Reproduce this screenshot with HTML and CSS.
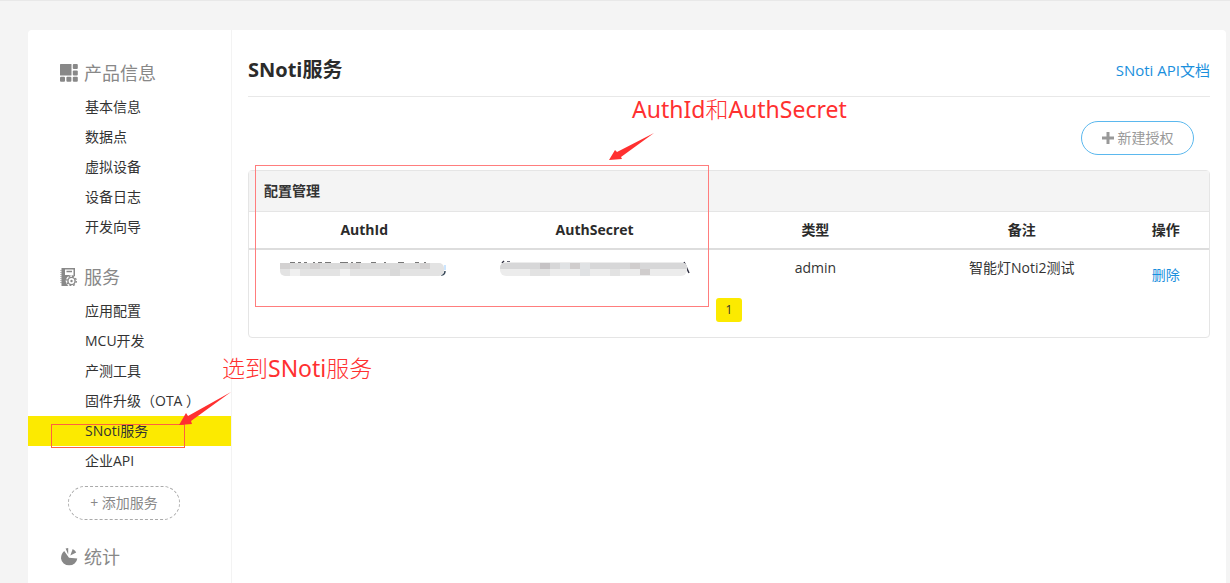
FILE: index.html
```html
<!DOCTYPE html>
<html lang="zh-CN">
<head>
<meta charset="utf-8">
<meta name="viewport" content="width=device-width, initial-scale=1">
<title>SNoti服务</title>
<link rel="stylesheet" href="styles.css">
</head>
<body>
<div class="card">
  <nav class="sidebar">
    <h2 class="group-title">
      <svg class="group-icon" viewBox="0 0 18 18"><rect width="11.500" height="11.500" rx=".5"/><rect x="12.800" width="5" height="5" rx="1"/><rect x="12.800" y="6.500" width="5" height="5" rx="1"/><rect x="12.800" y="12.800" width="5" height="5" rx="1"/><rect x="6.400" y="12.800" width="5" height="5" rx="1"/><rect y="12.800" width="5" height="5" rx="1"/></svg>
      产品信息
    </h2>
    <ul class="menu">
      <li><a class="item" href="#">基本信息</a></li>
      <li><a class="item" href="#">数据点</a></li>
      <li><a class="item" href="#">虚拟设备</a></li>
      <li><a class="item" href="#">设备日志</a></li>
      <li><a class="item" href="#">开发向导</a></li>
    </ul>
    <h2 class="group-title">
      <svg class="group-icon" viewBox="0 0 18 18"><path fill-rule="evenodd" d="M1.500 0H15v9H9v9H1.500zM5 1.500v5.500h8.500V1.500zM6.500 2.800h5.500v1.500H6.500z"/><path d="M1 2v14" stroke="#888" stroke-dasharray="1 1"/><circle cx="11.500" cy="13" r="5.800" fill="#fff"/><circle cx="11.500" cy="13" r="3.600" fill="none" stroke="#888" stroke-width="1.400"/><circle cx="11.500" cy="13" r="4.800" fill="none" stroke="#888" stroke-width="1.300" stroke-dasharray="1.880 1.890"/><circle cx="11.500" cy="13" r="1.200"/></svg>
      服务
    </h2>
    <ul class="menu">
      <li><a class="item" href="#">应用配置</a></li>
      <li><a class="item" href="#">MCU开发</a></li>
      <li><a class="item" href="#">产测工具</a></li>
      <li><a class="item" href="#">固件升级（OTA ）</a></li>
      <li><a class="item active" href="#">SNoti服务</a></li>
      <li><a class="item" href="#">企业API</a></li>
    </ul>
    <button class="add-service" type="button">+ 添加服务</button>
    <h2 class="group-title">
      <svg class="group-icon" viewBox="0 0 18 18"><path d="M4.200 3L9 9.800l8.300.700A8.200 7.700 0 0 1 1 10.500Q1 5.500 4.200 3zM5.600.6L8.200 0v6.500zM10.300 7.500L12.700 1q3 1.500 3.500 3.500z"/></svg>
      统计
    </h2>
  </nav>

  <main class="main">
    <header class="page-head">
      <h1 class="page-title">SNoti服务</h1>
      <a class="link doc-link" href="#">SNoti API文档</a>
    </header>
    <div class="toolbar">
      <button class="create" type="button">
        <svg class="plus" viewBox="0 0 12 12"><path d="M4.500 0h3v4.500H12v3H7.500V12h-3V7.500H0v-3h4.500z"/></svg>
        新建授权
      </button>
    </div>
    <section class="panel">
      <h3 class="panel-title">配置管理</h3>
      <table class="grid">
        <colgroup><col class="c-id"><col class="c-secret"><col class="c-type"><col class="c-note"><col></colgroup>
        <thead>
          <tr><th>AuthId</th><th>AuthSecret</th><th>类型</th><th>备注</th><th>操作</th></tr>
        </thead>
        <tbody>
          <tr>
            <td>
              <svg class="mask" width="170" height="20" viewBox="0 0 170 20">
                <path d="M11 4.500h5m3 0h3m3 0h3m6 0h2m3 0h4m3 0h6m9 0h8m3 0h2m3 0h5m10 0h5m8 0h2m12 0h6m11 0h4m5 0h2" stroke="#777"/>
                <path d="M166 7v5" stroke="#9cf"/><path d="M166 13q0 4-4 4" fill="none" stroke="#345" stroke-width="1.500"/>
                <rect x="1" y="5" width="164" height="13" rx="5" fill="#e3e3e3"/>
                <path d="M1 5h10v6H1zM31 5h10v6H31zM71 5h10v6H71zM141 5h10v6h-10z" fill="#d3d1d1"/>
                <path d="M11 5h20v6H11zM41 5h30v6H41zM81 5h60v6H81z" fill="#dadada"/>
                <path d="M61 11h10v7H61zM11 11h10v7H11z" fill="#f0f0f0"/>
                <path d="M111 11h10v7h-10z" fill="#d9d9d9"/>
              </svg>
            </td>
            <td>
              <svg class="mask" width="192" height="20" viewBox="0 0 192 20">
                <path d="M3 5l2-2m3 1h3M185 4l5 11M141 17h2" stroke="#334" stroke-width="1.500"/>
                <rect x="1" y="4" width="187" height="14" rx="6" fill="#ececec"/>
                <path d="M3 5h182q4 2 3 6H1q0-4 2-6z" fill="#d7d7d8"/>
                <path d="M41 5h10v6H41z" fill="#c6c3c5"/>
                <path d="M61 5h10v6H61zM81 5h10v13H81z" fill="#e0e2e4"/>
                <path d="M71 5h10v6H71zM131 5h10v6h-10zM141 11h10v6h-10z" fill="#d0cdcd"/>
                <path d="M31 11h20v7H31zM111 11h10v7h-10z" fill="#e2e2e2"/>
              </svg>
            </td>
            <td>admin</td>
            <td>智能灯Noti2测试</td>
            <td><a class="link delete" href="#">删除</a></td>
          </tr>
        </tbody>
      </table>
      <div class="pager"><button class="page" type="button">1</button></div>
    </section>
  </main>
</div>

<div class="notes">
  <div class="frame frame-table"></div>
  <div class="frame frame-menu"></div>
  <p class="note note-auth">AuthId<span class="thin">和</span>AuthSecret</p>
  <p class="note note-menu"><span class="thin">选到</span>SNoti<span class="thin">服务</span></p>
  <svg class="arrow arrow-auth" width="48" height="30" viewBox="0 0 48 30"><path d="M46 1L13 25l1 2L1 28l6-10 2 2z"/></svg>
  <svg class="arrow arrow-menu" width="54" height="36" viewBox="0 0 54 36"><path d="M53 1L13 30l1 3L1 34l7-12 2 3z"/></svg>
</div>
</body>
</html>
```
FILE: styles.css
```css
* { box-sizing: border-box; }

body {
  margin: 0;
  height: 100vh;
  overflow: hidden;
  display: flex;
  padding: 29px 4px 0 28px;
  border-top: 1px solid #e8e8e8;
  background: #f4f4f4;
  color: #333;
  font: 14px/20px "Open Sans", "Noto Sans CJK SC", sans-serif;
}

h1, h2, h3, p, ul { margin: 0; padding: 0; }
ul { list-style: none; }
a { text-decoration: none; }
button { font: inherit; cursor: pointer; }

.card {
  flex: 1;
  display: flex;
  background: #fff;
  border-radius: 4px 4px 0 0;
}

.sidebar {
  flex: none;
  width: 204px;
  padding-top: 24px;
  border-right: 1px solid #f3f3f3;
}

.group-title {
  display: flex;
  align-items: center;
  gap: 6px;
  height: 38px;
  padding-left: 32px;
  color: #888;
  font-size: 18px;
  font-weight: 400;
}

.group-icon { width: 18px; height: 18px; fill: #888; }
.menu + .group-title { margin-top: 16px; }

.item {
  display: block;
  padding-left: 57px;
  line-height: 30px;
  color: #333;
}

.item.active { background: #fcea00; }

.add-service {
  display: block;
  width: 112px;
  height: 34px;
  margin: 10px 0 18px 40px;
  padding: 0;
  border: 1px dashed #aaa;
  border-radius: 17px;
  background: none;
  color: #888;
}

.main { flex: 1; padding: 0 16px; }

.page-head {
  display: flex;
  justify-content: space-between;
  align-items: center;
  height: 67px;
  padding-top: 14px;
  border-bottom: 1px solid #e8e8e8;
}

.page-title { font-size: 20px; line-height: 28px; color: #2b2b2b; }
.link { color: #1a8fdd; }
.doc-link { font-size: 15px; }

.toolbar {
  display: flex;
  justify-content: flex-end;
  padding: 24px 16px 15px;
}

.create {
  display: flex;
  align-items: center;
  justify-content: center;
  gap: 4px;
  width: 113px;
  height: 34px;
  padding: 0;
  border: 1px solid #5bb8ee;
  border-radius: 17px;
  background: #fff;
  color: #999;
}

.plus { width: 12px; height: 12px; fill: #999; }

.panel {
  border: 1px solid #e5e5e5;
  border-radius: 4px;
  padding-bottom: 15px;
}

.panel-title {
  padding: 10px 15px;
  border-bottom: 1px solid #e5e5e5;
  background: #f4f4f4;
  font-size: 14px;
}

.grid {
  width: 100%;
  table-layout: fixed;
  border-collapse: collapse;
  text-align: center;
}

.c-id { width: 24%; }
.c-secret { width: 24%; }
.c-type { width: 22%; }
.c-note { width: 21%; }

.grid th { padding: 8px 0; border-bottom: 2px solid #ddd; color: #2b2b2b; }
.grid td { padding: 8px 0; vertical-align: top; }
.mask { display: block; margin: 0 auto; }
.delete { display: block; padding-top: 7px; }

.pager { display: flex; justify-content: center; padding-top: 5px; }

.page {
  width: 26px;
  height: 24px;
  padding: 0;
  border: 0;
  border-radius: 3px;
  background: #fcea00;
  color: #333;
  font-size: 12px;
}

.notes {
  position: absolute;
  inset: 0;
  pointer-events: none;
}

.frame, .note, .arrow { position: absolute; }
.frame { border: 1px solid #ff7d7d; }
.frame-table { left: 255px; top: 165px; width: 454px; height: 142px; }
.frame-menu { left: 51px; top: 424px; width: 134px; height: 24px; border-color: #ff6040; }

.note {
  color: #ff3030;
  font: 400 23px/32px "Noto Sans", "Noto Sans CJK SC", sans-serif;
  white-space: nowrap;
}

.thin { font-weight: 300; }

.note-auth { left: 632px; top: 93px; }
.note-menu { left: 222px; top: 352px; }
.arrow { fill: #ff3030; }
.arrow-auth { left: 608px; top: 132px; }
.arrow-menu { left: 178px; top: 391px; }
```
